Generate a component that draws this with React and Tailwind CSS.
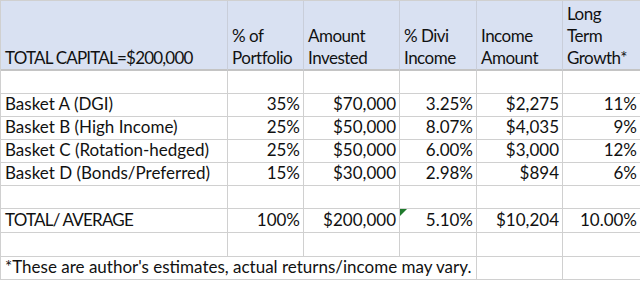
const rows = [
  ["Basket A (DGI)", "35%", "$70,000", "3.25%", "$2,275", "11%"],
  ["Basket B (High Income)", "25%", "$50,000", "8.07%", "$4,035", "9%"],
  ["Basket C (Rotation-hedged)", "25%", "$50,000", "6.00%", "$3,000", "12%"],
  ["Basket D (Bonds/Preferred)", "15%", "$30,000", "2.98%", "$894", "6%"],
];

const line = "border-r border-b border-[#d0d0d0]";

function Cell({ children, right, h = "h-[23px]", extra = "" }) {
  return (
    <div className={`${line} ${h} flex items-end pb-[1px] whitespace-nowrap ${right ? "justify-end pr-[3px]" : "pl-[4px]"} ${extra}`}>
      {children}
    </div>
  );
}

function Blank({ h }) {
  return (
    <>
      {[0, 1, 2, 3, 4, 5].map((i) => (
        <Cell key={i} h={h} />
      ))}
    </>
  );
}

export default function App() {
  return (
    <div className="w-[640px] h-[287px] bg-white text-[#111] font-['Lato',sans-serif] text-[17px] leading-[22px]">
      <div className="grid grid-cols-[227px_76px_96px_77px_86px_78px] border-l border-t border-[#d0d0d0]">
        {/* header */}
        {[
          ["TOTAL CAPITAL=$200,000"],
          ["% of", "Portfolio"],
          ["Amount", "Invested"],
          ["% Divi", "Income"],
          ["Income", "Amount"],
          ["Long", "Term", "Growth*"],
        ].map((lines, i) => (
          <div
            key={i}
            className={`h-[70px] bg-[#d9e1f2] border-r border-[#c9ceda] border-b-2 border-b-[#c4c4c4] flex flex-col justify-end pl-[4px] whitespace-nowrap ${i === 0 ? "tracking-[-0.8px]" : "tracking-[-0.5px]"}`}
          >
            {lines.map((t) => (
              <span key={t}>{t}</span>
            ))}
          </div>
        ))}

        <Blank />

        {rows.map((r) =>
          r.map((v, i) => (
            <Cell key={r[0] + i} right={i > 0}>
              {v}
            </Cell>
          ))
        )}

        <Blank />

        <Cell h="h-[24px]" extra="tracking-[-0.8px]">TOTAL/ AVERAGE</Cell>
        <Cell right h="h-[24px]">100%</Cell>
        <Cell right h="h-[24px]">$200,000</Cell>
        <Cell right h="h-[24px]" extra="relative">
          <span className="absolute left-0 top-0 w-0 h-0 border-t-[7px] border-r-[7px] border-t-[#1f7a2c] border-r-transparent" />
          5.10%
        </Cell>
        <Cell right h="h-[24px]">$10,204</Cell>
        <Cell right h="h-[24px]">10.00%</Cell>

        <Blank h="h-[24px]" />

        <div className={`${line} col-span-4 h-[23px] flex items-end pl-[4px] pb-[1px] whitespace-nowrap`}>
          *These are author's estimates, actual returns/income may vary.
        </div>
        <Cell />
        <Cell />
      </div>
    </div>
  );
}
